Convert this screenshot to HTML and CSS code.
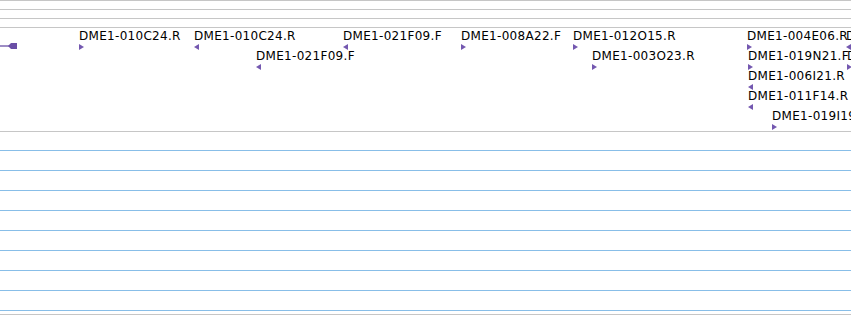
FILE: index.html
```html
<!DOCTYPE html>
<html lang="en">
<head>
    <meta charset="UTF-8">
    <title>Track view</title>
    <link rel="stylesheet" href="styles.css">
</head>
<body>

<div class="browser">
    <!-- ruler rows -->
    <div class="ruler">
        <div class="ruler-row"></div>
        <div class="ruler-row"></div>
        <div class="ruler-row"></div>
    </div>

    <!-- feature track, features placed by coordinate -->
    <div class="track">
        <svg class="arrow" width="18" height="9" viewBox="0 0 18 9">
            <line x1="0" y1="5" x2="10" y2="5" stroke="#6a4fa6" stroke-width="1.3"/>
            <polygon points="8,5 11,2 17,2 17,8 11,8" fill="#6a4fa6"/>
        </svg>

        <div class="feature row-1" style="left:79px"><span class="label">DME1-010C24.R</span><i class="mark fwd"></i></div>
        <div class="feature row-1" style="left:194px"><span class="label">DME1-010C24.R</span><i class="mark rev"></i></div>
        <div class="feature row-2" style="left:256px"><span class="label">DME1-021F09.F</span><i class="mark rev"></i></div>
        <div class="feature row-1" style="left:343px"><span class="label">DME1-021F09.F</span><i class="mark rev"></i></div>
        <div class="feature row-1" style="left:461px"><span class="label">DME1-008A22.F</span><i class="mark fwd"></i></div>
        <div class="feature row-1" style="left:573px"><span class="label">DME1-012O15.R</span><i class="mark fwd"></i></div>
        <div class="feature row-2" style="left:592px"><span class="label">DME1-003O23.R</span><i class="mark fwd"></i></div>
        <div class="feature row-1" style="left:747px"><span class="label">DME1-004E06.R</span><i class="mark fwd"></i></div>
        <div class="feature row-1" style="left:846px"><span class="label">DME1-004E06.F</span><i class="mark rev"></i></div>
        <div class="feature row-2" style="left:748px"><span class="label">DME1-019N21.F</span><i class="mark fwd"></i></div>
        <div class="feature row-2" style="left:847px"><span class="label">DME1-019N21.R</span><i class="mark fwd"></i></div>
        <div class="feature row-3" style="left:748px"><span class="label">DME1-006I21.R</span><i class="mark rev"></i></div>
        <div class="feature row-4" style="left:748px"><span class="label">DME1-011F14.R</span><i class="mark rev"></i></div>
        <div class="feature row-5" style="left:772px"><span class="label">DME1-019I19.F</span><i class="mark fwd"></i></div>
    </div>

    <!-- empty data track -->
    <div class="lanes">
        <div class="lane"></div>
        <div class="lane"></div>
        <div class="lane"></div>
        <div class="lane"></div>
        <div class="lane"></div>
        <div class="lane"></div>
        <div class="lane"></div>
        <div class="lane"></div>
        <div class="lane lane-end"></div>
    </div>
</div>

</body>
</html>
```

FILE: styles.css
```css
body {
    margin: 0;
    padding: 0;
    background-color: white;
    font-family: 'DejaVu Sans', sans-serif;
    color: #000;
}

.browser {
    width: 851px;
    height: 315px;
    overflow: hidden;
}

.ruler {
    border-bottom: 1px solid #c6c6c6;
}

.ruler-row {
    height: 9px;
    box-sizing: border-box;
    border-top: 1px solid #c6c6c6;
}

.track {
    position: relative;
    height: 103px;
    overflow: hidden;
    border-bottom: 1px solid #c6c6c6;
}

.arrow {
    position: absolute;
    left: 0;
    top: 13px;
}

.feature {
    position: absolute;
    display: flex;
    flex-direction: column;
    align-items: flex-start;
    white-space: nowrap;
}

.row-1 { top: 1px; }
.row-2 { top: 21px; }
.row-3 { top: 41px; }
.row-4 { top: 61px; }
.row-5 { top: 81px; }

.label {
    font-size: 12px;
    line-height: 14px;
    letter-spacing: 0.3px;
}

.mark {
    display: block;
    width: 0;
    height: 0;
    margin-top: 1px;
    border-top: 3px solid transparent;
    border-bottom: 3px solid transparent;
}

.fwd {
    border-left: 5px solid #7458b0;
}

.rev {
    border-right: 5px solid #7458b0;
}

.lanes {
    padding-top: 18px;
    border-bottom: 1px solid #c6c6c6;
}

.lane {
    height: 20px;
    box-sizing: border-box;
    border-top: 1px solid #88bee8;
}

.lane-end {
    height: 4px;
}
```
